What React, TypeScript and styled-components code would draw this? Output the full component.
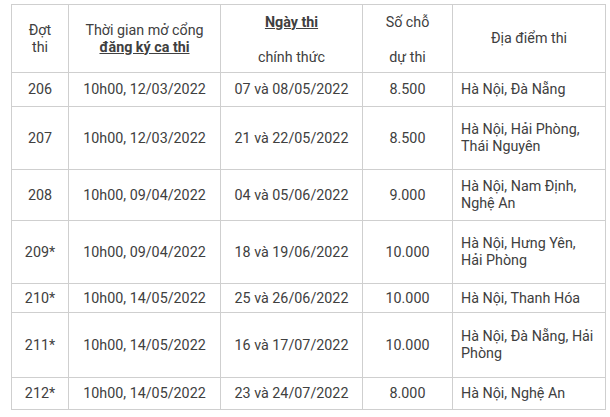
import React from "react";
import styled, { createGlobalStyle } from "styled-components";

const Global = createGlobalStyle`
  html, body { margin: 0; padding: 0; background: #fff; }
  body { font-family: Roboto, "Noto Sans", Arial, sans-serif; }
`;

const Page = styled.div`
  padding: 4px 0 0 11px;
`;

const Table = styled.table`
  border-collapse: collapse;
  table-layout: fixed;
  width: 594px;
  font-size: 14.3px;
  color: #404040;
`;

const Row = styled.tr<{ $h: number }>`
  height: ${(p) => p.$h}px;
`;

const Cell = styled.td<{ $left?: boolean }>`
  border: 1px solid #cfcfcf;
  padding: ${(p) => (p.$left ? "0 10px 0 8px" : "0 2px")};
  text-align: ${(p) => (p.$left ? "left" : "center")};
  vertical-align: middle;
  line-height: 17px;
`;

const Head = styled.td`
  border: 1px solid #cfcfcf;
  padding: 0 2px;
  text-align: center;
  vertical-align: middle;
  line-height: 17px;
`;

const Spread = styled.div`
  display: flex;
  flex-direction: column;
  gap: 18px;
  padding-top: 2px;
`;

const Strong = styled.span`
  font-weight: 700;
  text-decoration: underline;
`;

const rows = [
  { id: "206", open: "10h00, 12/03/2022", date: "07 và 08/05/2022", seats: "8.500", place: "Hà Nội, Đà Nẵng", h: 34 },
  { id: "207", open: "10h00, 12/03/2022", date: "21 và 22/05/2022", seats: "8.500", place: "Hà Nội, Hải Phòng, Thái Nguyên", h: 63 },
  { id: "208", open: "10h00, 09/04/2022", date: "04 và 05/06/2022", seats: "9.000", place: "Hà Nội, Nam Định, Nghệ An", h: 51 },
  { id: "209*", open: "10h00, 09/04/2022", date: "18 và 19/06/2022", seats: "10.000", place: "Hà Nội, Hưng Yên, Hải Phòng", h: 63 },
  { id: "210*", open: "10h00, 14/05/2022", date: "25 và 26/06/2022", seats: "10.000", place: "Hà Nội, Thanh Hóa", h: 29 },
  { id: "211*", open: "10h00, 14/05/2022", date: "16 và 17/07/2022", seats: "10.000", place: "Hà Nội, Đà Nẵng, Hải Phòng", h: 65 },
  { id: "212*", open: "10h00, 14/05/2022", date: "23 và 24/07/2022", seats: "8.000", place: "Hà Nội, Nghệ An", h: 32 },
];

export default function App() {
  return (
    <Page>
      <Global />
      <Table>
        <colgroup>
          <col style={{ width: 57 }} />
          <col style={{ width: 152 }} />
          <col style={{ width: 142 }} />
          <col style={{ width: 90 }} />
          <col style={{ width: 153 }} />
        </colgroup>
        <tbody>
          <Row $h={68}>
            <Head>Đợt<br />thi</Head>
            <Head>Thời gian mở cổng<br /><Strong>đăng ký ca thi</Strong></Head>
            <Head>
              <Spread>
                <Strong>Ngày thi</Strong>
                <span>chính thức</span>
              </Spread>
            </Head>
            <Head>
              <Spread>
                <span>Số chỗ</span>
                <span>dự thi</span>
              </Spread>
            </Head>
            <Head>Địa điểm thi</Head>
          </Row>
          {rows.map((r) => (
            <Row key={r.id} $h={r.h}>
              <Cell>{r.id}</Cell>
              <Cell>{r.open}</Cell>
              <Cell>{r.date}</Cell>
              <Cell>{r.seats}</Cell>
              <Cell $left>{r.place}</Cell>
            </Row>
          ))}
        </tbody>
      </Table>
    </Page>
  );
}
